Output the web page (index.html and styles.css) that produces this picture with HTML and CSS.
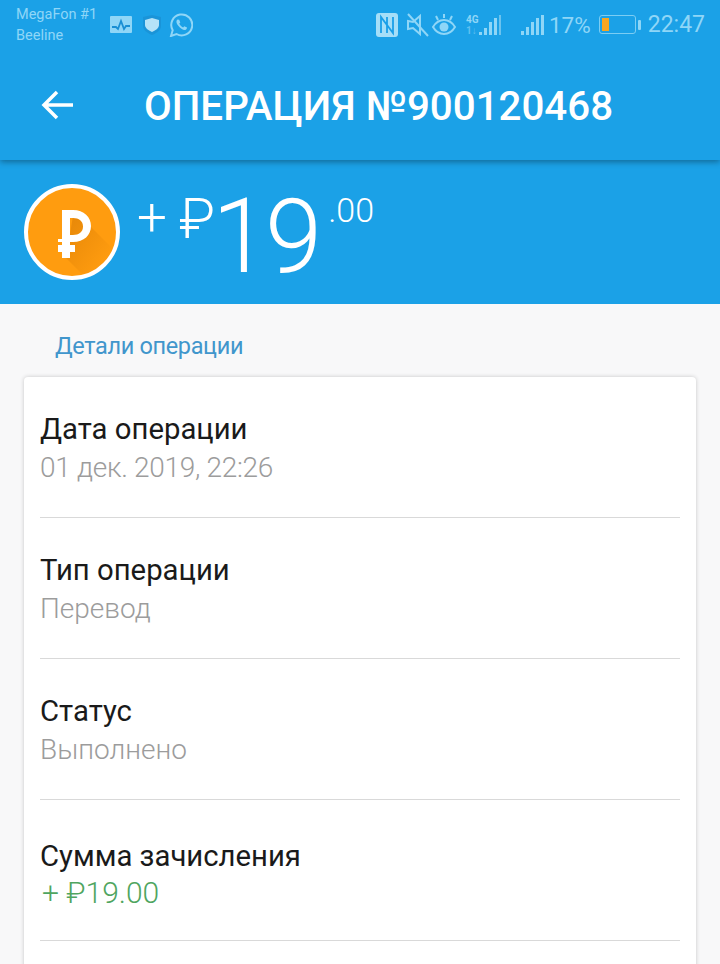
FILE: index.html
```html
<!DOCTYPE html>
<html>
<head>
  <title>Операция</title>
  <link rel="stylesheet" href="styles.css">
</head>
<body>
  <div class="status-bar">
    <div class="carriers">
      <div>MegaFon #1</div>
      <div>Beeline</div>
    </div>
    <div class="status-icons-left">
      <svg width="24" height="18" viewBox="0 0 24 18"><rect x="1" y="0" width="22" height="17" rx="1" fill="#8fd6f7"/><path d="M3 11h4l2 2 3-8 3 8 2-3h4" fill="none" stroke="#1a8fd4" stroke-width="1.800"/></svg>
      <svg class="shield" width="20" height="20" viewBox="0 0 20 20"><path d="M10 0l9 2v9c0 4-4 7-9 9-5-2-9-5-9-9V2z" fill="#1a94d8"/><path d="M10 3l7 2v5c0 3-3 5-7 7-4-2-7-4-7-7V5z" fill="#b5e3f8"/></svg>
      <svg class="whatsapp" width="24" height="24" viewBox="0 0 24 24"><path d="M2 23l1.700-5.800A10.500 10.500 0 1 1 7.500 21z" fill="none" stroke="#8fd6f7" stroke-width="2"/><path d="M8.500 6.500c-1.500 1-1.500 3.500.8 6.300s5 4.700 7 4.200c1.200-.4 1.900-1.700 1.700-2.400l-2.700-1.400-1.200 1.200c-1.700-.6-3.200-2.200-3.800-3.900l1-1.100-1.100-2.700z" fill="#8fd6f7"/></svg>
    </div>
    <div class="status-icons-right">
      <svg width="24" height="24" viewBox="0 0 24 24"><rect x="1" y="0" width="22" height="24" rx="3" fill="#a5def8"/><path d="M6 20V4l6 8V4M18 4v16l-6-8v8" fill="none" stroke="#1a9fe8" stroke-width="1.800"/></svg>
      <svg class="mute" width="24" height="24" viewBox="0 0 24 24"><path d="M3 8v8l5-1 7 6V3L8 9z" fill="none" stroke="#8fd6f7" stroke-width="2"/><path d="M3 1l20 22" stroke="#8fd6f7" stroke-width="2"/></svg>
      <svg class="eye" width="26" height="24" viewBox="0 0 26 24"><path d="M2 14c3-5 7-7 11-7s8 2 11 7c-3 5-7 7-11 7s-8-2-11-7z" fill="none" stroke="#8fd6f7" stroke-width="2"/><circle cx="13" cy="14" r="4.500" fill="#8fd6f7"/><path d="M13 1v4M5 3l2 4M21 3l-2 4" stroke="#8fd6f7" stroke-width="2"/></svg>
      <div class="net">
        <div class="net-label">4G<span>1↓</span></div>
        <svg width="22" height="22" viewBox="0 0 22 22"><path d="M0 18h3v3H0zM5 14h3v7H5zM10 8h3v13h-3zM15 4h3v17h-3z" fill="#8fd6f7"/><path d="M20 1h2v20h-2z" fill="#6cc3ee"/></svg>
      </div>
      <svg class="signal" width="24" height="24" viewBox="0 0 24 24"><path d="M1 18h3v4H1zM6 14h3v8H6zM11 9h3v13h-3zM16 5h3v17h-3zM21 2h3v20h-3z" fill="#8fd6f7"/></svg>
      <span class="percent">17%</span>
      <div class="battery"><div class="battery-level"></div></div>
      <div class="battery-tip"></div>
      <span class="clock">22:47</span>
    </div>
  </div>

  <div class="toolbar">
    <svg class="back" width="34" height="30" viewBox="0 0 34 30"><path d="M33 15H4M17 2L4 15l13 13" fill="none" stroke="#fff" stroke-width="3.500"/></svg>
    <h1>ОПЕРАЦИЯ №900120468</h1>
  </div>

  <div class="amount-band">
    <div class="coin">
      <svg width="88" height="88" viewBox="0 0 88 88">
        <defs>
          <linearGradient id="coin-shade" x1="0" y1="0" x2="1" y2="1">
            <stop offset="0" stop-color="#c96f00" stop-opacity=".5"/>
            <stop offset=".8" stop-color="#c96f00" stop-opacity="0"/>
          </linearGradient>
        </defs>
        <path d="M46 22L88 64V88H56L38 70z" fill="url(#coin-shade)"/>
        <path fill-rule="evenodd" d="M34 22h11c11 0 18 7 18 16s-7 16-18 16h-3v3h5v7h-5v6h-8v-6h-4v-7h4v-3h-4v-3h4zM42 30v17h3c6 0 10-3 10-8.500S51 30 45 30z" fill="#fff"/>
      </svg>
    </div>
    <div class="amount">
      <span class="plus">+</span>
      <span class="rub">₽</span>
      <span class="whole">19</span>
      <span class="cents">.00</span>
    </div>
  </div>

  <div class="content">
    <div class="section-title">Детали операции</div>
    <div class="card">
      <div class="row">
        <div class="row-label">Дата операции</div>
        <div class="row-value row-date">01 дек. 2019, 22:26</div>
      </div>
      <div class="row">
        <div class="row-label">Тип операции</div>
        <div class="row-value">Перевод</div>
      </div>
      <div class="row">
        <div class="row-label">Статус</div>
        <div class="row-value">Выполнено</div>
      </div>
      <div class="row row-sum">
        <div class="row-label">Сумма зачисления</div>
        <div class="row-value">+ ₽19.00</div>
      </div>
      <div class="card-rest"></div>
    </div>
  </div>
</body>
</html>
```

FILE: styles.css
```css
html, body {
  margin: 0;
  height: 964px;
  overflow: hidden;
}
body {
  background: #f8f8f9;
  font-family: Roboto, "Liberation Sans", sans-serif;
}

.status-bar {
  height: 50px;
  background: #1ba1e7;
  display: flex;
  align-items: center;
  justify-content: space-between;
  color: #8fd6f7;
  padding: 0 15px 0 16px;
  position: relative;
  z-index: 2;
}
.carriers {
  font-size: 14.5px;
  line-height: 21px;
  margin-top: -1px;
  width: 93px;
  white-space: nowrap;
}
.status-icons-left {
  display: flex;
  align-items: center;
  flex: 1;
  margin-top: -1px;
}
.shield { margin-left: 9px; }
.whatsapp { margin-left: 7px; }
.status-icons-right {
  display: flex;
  align-items: center;
  margin-top: -1px;
}
.mute { margin-left: 6px; }
.eye { margin-left: 2px; }
.net {
  display: flex;
  align-items: flex-end;
  margin-left: 9px;
}
.net-label {
  font-size: 10px;
  font-weight: 700;
  line-height: 11px;
  width: 13px;
}
.net-label span {
  display: block;
  opacity: .6;
}
.signal { margin-left: 19px; }
.percent {
  font-size: 22.5px;
  margin-left: 5px;
}
.battery {
  border: 1.5px solid #7ccdf3;
  border-radius: 3px;
  margin-left: 8px;
  padding: 2px;
  width: 31px;
  height: 13px;
}
.battery-level {
  width: 7px;
  height: 100%;
  background: #f5a623;
}
.battery-tip {
  width: 3px;
  height: 10px;
  background: #8fd6f7;
  margin-left: 2px;
  border-radius: 1px;
}
.clock {
  font-size: 23px;
  margin-left: 7px;
}

.toolbar {
  height: 110px;
  background: #1ba1e7;
  display: flex;
  align-items: center;
  box-shadow: 0 2px 6px rgba(0, 0, 0, .35);
  position: relative;
  padding-left: 40px;
  box-sizing: border-box;
}
.back { margin-right: 70px; }
.toolbar h1 {
  margin: 2px 0 0;
  color: #fff;
  font-size: 40.3px;
  font-weight: 500;
  white-space: nowrap;
}

.amount-band {
  height: 144px;
  background: #1ba1e7;
  display: flex;
  padding-left: 24px;
  box-sizing: border-box;
  color: #fff;
}
.coin {
  width: 88px;
  height: 88px;
  margin-top: 24px;
  border: 4px solid #fff;
  border-radius: 50%;
  background: #ff9c0f;
  overflow: hidden;
  flex: none;
}
.coin svg { display: block; }
.amount {
  display: flex;
  align-items: flex-start;
  font-weight: 300;
  margin-left: 17px;
  white-space: nowrap;
}
.plus {
  font-size: 53px;
  line-height: 61px;
  margin-top: 28px;
}
.rub {
  font-size: 56px;
  line-height: 66px;
  margin: 26px 0 0 12px;
}
.whole {
  font-size: 103px;
  letter-spacing: -4px;
  line-height: 118px;
  margin: 18px 0 0 -3px;
}
.cents {
  font-size: 34px;
  line-height: 41px;
  margin: 30px 0 0 10px;
}

.section-title {
  color: #4196cc;
  font-size: 23.5px;
  letter-spacing: -.35px;
  line-height: 28px;
  padding: 28px 0 17px 55px;
}
.card {
  margin: 0 24px;
  background: #fff;
  border-radius: 4px;
  box-shadow: 0 0 4px rgba(0, 0, 0, .2);
  padding: 0 16px;
}
.row {
  height: 141px;
  box-sizing: border-box;
  padding-top: 33px;
  border-bottom: 1px solid #d9d9d9;
}
.row-sum { padding-top: 37px; }
.row-label {
  font-size: 29.3px;
  line-height: 38px;
  color: #1a1a1a;
}
.row-value {
  font-size: 28px;
  font-weight: 300;
  line-height: 40px;
  color: #9c9c9c;
}
.row-date { letter-spacing: -.3px; }
.row-sum .row-value {
  font-size: 30px;
  line-height: 36px;
  padding-left: 2px;
  color: #4fa560;
}
.card-rest { height: 60px; }
```
